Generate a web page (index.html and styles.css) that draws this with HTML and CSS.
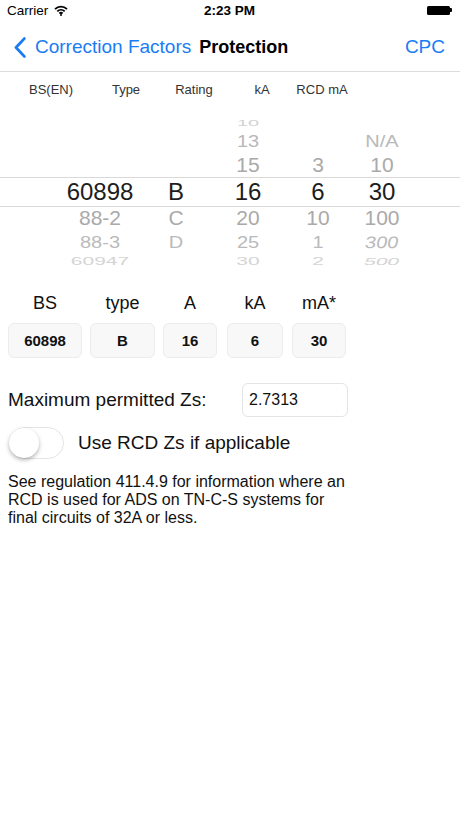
FILE: index.html
```html
<!DOCTYPE html>
<html lang="en">

<head>
  <meta charset="UTF-8">
  <meta name="viewport" content="width=device-width, initial-scale=1.0">
  <title>Protection</title>
  <link rel="stylesheet" href="styles.css">
</head>

<body>
  <div class="status-bar">
    <div class="carrier">
      Carrier
      <svg class="wifi" width="14" height="11" viewBox="0 0 14 11">
        <path d="M1 4.2 A8.5 8.5 0 0 1 13 4.2" />
        <path d="M3.3 6.4 A5.3 5.3 0 0 1 10.7 6.4" />
        <path d="M5.4 8.5 A2.3 2.3 0 0 1 8.6 8.5" />
        <circle cx="7" cy="9.9" r="1" />
      </svg>
    </div>
    <div class="clock">2:23 PM</div>
    <div class="battery">
      <span class="battery-body"></span>
      <span class="battery-tip"></span>
    </div>
  </div>

  <div class="nav-bar">
    <a class="back" href="#">
      <svg class="chevron" width="12" height="21" viewBox="0 0 12 21">
        <path d="M10.3 1.6 L2 10.5 L10.3 19.4" />
      </svg>
      Correction Factors
    </a>
    <span class="title">Protection</span>
    <a class="nav-right" href="#">CPC</a>
  </div>

  <div class="wheel-heads">
    <span>BS(EN)</span>
    <span>Type</span>
    <span>Rating</span>
    <span>kA</span>
    <span>RCD mA</span>
  </div>

  <!-- picker wheel, one row per visible position -->
  <div class="wheel">
    <div class="wheel-row far-top"><span></span><span></span><span>10</span><span></span><span></span></div>
    <div class="wheel-row top2"><span></span><span></span><span>13</span><span></span><span>N/A</span></div>
    <div class="wheel-row top1"><span></span><span></span><span>15</span><span>3</span><span>10</span></div>
    <div class="wheel-row selected"><span>60898</span><span>B</span><span>16</span><span>6</span><span>30</span></div>
    <div class="wheel-row bottom1"><span>88-2</span><span>C</span><span>20</span><span>10</span><span>100</span></div>
    <div class="wheel-row bottom2"><span>88-3</span><span>D</span><span>25</span><span>1</span><span>300</span></div>
    <div class="wheel-row far-bottom"><span>60947</span><span></span><span>30</span><span>2</span><span>500</span></div>
  </div>

  <div class="content">
    <div class="fields">
      <div class="field">
        <span class="field-label">BS</span>
        <div class="field-box">60898</div>
      </div>
      <div class="field">
        <span class="field-label">type</span>
        <div class="field-box">B</div>
      </div>
      <div class="field">
        <span class="field-label">A</span>
        <div class="field-box">16</div>
      </div>
      <div class="field">
        <span class="field-label">kA</span>
        <div class="field-box">6</div>
      </div>
      <div class="field">
        <span class="field-label">mA*</span>
        <div class="field-box">30</div>
      </div>
    </div>

    <div class="zs-row">
      <label for="zs">Maximum permitted Zs:</label>
      <input id="zs" class="zs-value" type="text" value="2.7313" readonly>
    </div>

    <div class="toggle-row">
      <div class="switch"><span class="knob"></span></div>
      <span>Use RCD Zs if applicable</span>
    </div>

    <p class="note">
      See regulation 411.4.9 for information where an<br>
      RCD is used for ADS on TN-C-S systems for<br>
      final circuits of 32A or less.
    </p>
  </div>
</body>

</html>
```

FILE: styles.css
```css
body {
  font-family: "Liberation Sans", Arial, sans-serif;
  background-color: #fff;
  color: #111;
  margin: 0;
  padding: 0;
}

a {
  text-decoration: none;
}

/* status bar */
.status-bar {
  display: grid;
  grid-template-columns: 1fr auto 1fr;
  align-items: center;
  height: 20px;
  padding: 0 8px 0 7px;
  font-size: 13.5px;
  color: #000;
}

.carrier {
  display: flex;
  align-items: center;
  gap: 6px;
}

.wifi path {
  fill: none;
  stroke: #000;
  stroke-width: 1.8;
}

.wifi circle {
  fill: #000;
}

.clock {
  font-weight: bold;
}

.battery {
  display: flex;
  align-items: center;
  justify-content: flex-end;
}

.battery-body {
  width: 23px;
  height: 9px;
  background-color: #000;
  border-radius: 1.5px;
}

.battery-tip {
  width: 2px;
  height: 4px;
  background-color: #000;
  border-radius: 0 1px 1px 0;
}

/* navigation */
.nav-bar {
  display: flex;
  align-items: center;
  height: 52px;
  box-sizing: border-box;
  padding: 3px 15px 0 14px;
  border-bottom: 1px solid #dcdcdc;
}

.back {
  display: flex;
  align-items: center;
  gap: 9px;
  color: #1a7cf4;
  font-size: 19px;
}

.chevron path {
  fill: none;
  stroke: #1a7cf4;
  stroke-width: 2.8;
  stroke-linecap: round;
  stroke-linejoin: round;
}

.title {
  margin-left: 8px;
  font-size: 18px;
  font-weight: bold;
  color: #000;
}

.nav-right {
  margin-left: auto;
  color: #1a7cf4;
  font-size: 19px;
}

/* picker */
.wheel-heads {
  display: grid;
  grid-template-columns: 90px 60px 76px 60px 60px;
  padding-left: 6px;
  height: 36px;
  line-height: 36px;
  font-size: 13px;
  color: #333;
  text-align: center;
}

.wheel {
  margin-top: 7px;
}

.wheel-row {
  display: grid;
  grid-template-columns: 80px 72px 72px 68px 60px;
  padding-left: 60px;
  text-align: center;
  box-sizing: border-box;
}

.wheel-row span {
  white-space: nowrap;
}

.far-top {
  height: 16px;
  line-height: 16px;
  font-size: 20px;
  color: #d2d2d2;
}

.far-top span {
  transform: scaleY(0.48);
}

.top2 {
  height: 22px;
  line-height: 22px;
  font-size: 20px;
  color: #b8b8b8;
}

.top2 span {
  transform: scaleY(0.78);
}

.top1 {
  height: 24px;
  line-height: 24px;
  font-size: 21px;
  color: #aaa;
}

.top1 span {
  transform: scaleY(0.95);
}

.selected {
  height: 30px;
  line-height: 28px;
  font-size: 24px;
  color: #1d1d1d;
  border-top: 1px solid #d9d9d9;
  border-bottom: 1px solid #d9d9d9;
}

.bottom1 {
  height: 22px;
  line-height: 22px;
  font-size: 21px;
  color: #aaa;
}

.bottom1 span {
  transform: scaleY(0.95);
}

.bottom2 {
  height: 26px;
  line-height: 26px;
  font-size: 20px;
  color: #bababa;
}

.bottom2 span {
  transform: scaleY(0.82);
}

.far-bottom {
  height: 14px;
  line-height: 14px;
  font-size: 21px;
  color: #d4d4d4;
}

.far-bottom span {
  transform: scaleY(0.48);
}

.bottom2 span:nth-child(5) {
  transform: scaleY(0.82) skewX(-8deg);
}

.far-bottom span:nth-child(5) {
  transform: scaleY(0.48) skewX(-10deg);
}

/* fields */
.content {
  padding: 0 8px;
}

.fields {
  display: grid;
  grid-template-columns: 74px 65px 54px 58px 55px;
  column-gap: 8px;
  margin-top: 23px;
}

.field {
  display: flex;
  flex-direction: column;
  align-items: center;
  gap: 9px;
}

.field:nth-child(4) {
  margin-left: 2px;
}

.field:nth-child(5) {
  margin-left: 1px;
}

.field-label {
  font-size: 18px;
  line-height: 22px;
  color: #111;
}

.field-box {
  width: 100%;
  height: 35px;
  box-sizing: border-box;
  display: flex;
  align-items: center;
  justify-content: center;
  background-color: #f8f8f8;
  border: 1px solid #ececec;
  border-radius: 6px;
  font-size: 15px;
  font-weight: bold;
}

.zs-row {
  display: grid;
  grid-template-columns: 234px 106px;
  align-items: center;
  margin-top: 25px;
  font-size: 19px;
}

.zs-value {
  height: 34px;
  box-sizing: border-box;
  padding: 0 6px;
  border: 1px solid #e4e4e4;
  border-radius: 6px;
  font-family: inherit;
  font-size: 16px;
  color: #111;
  background-color: #fff;
  outline: none;
}

.toggle-row {
  display: flex;
  align-items: center;
  gap: 14px;
  margin-top: 10px;
  font-size: 19px;
}

.switch {
  width: 55px;
  height: 32px;
  box-sizing: border-box;
  border: 1.5px solid #e4e4e4;
  border-radius: 16px;
  display: flex;
  align-items: center;
  margin-left: 1px;
}

.knob {
  width: 30px;
  height: 30px;
  border-radius: 50%;
  background-color: #fff;
  box-shadow: 0 2px 4px rgba(0, 0, 0, 0.3);
  margin-left: -1px;
}

.note {
  margin: 14px 0 0;
  font-size: 16px;
  line-height: 18px;
}
```
